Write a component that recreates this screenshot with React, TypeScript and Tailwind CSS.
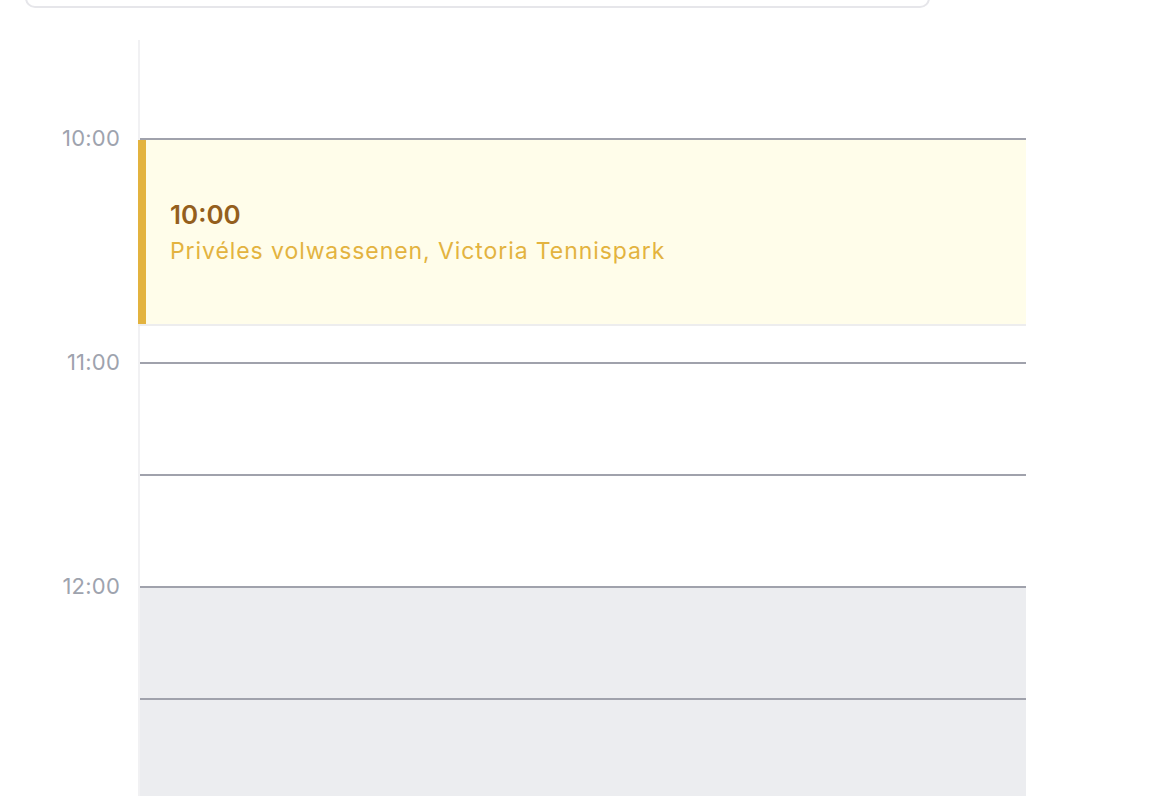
import React from "react";

interface Slot {
  height: number;
  label?: string;
  line: boolean;
  closed?: boolean;
}

const slots: Slot[] = [
  { height: 98, line: false },
  { height: 112, line: true, label: "10:00" },
  { height: 112, line: true },
  { height: 112, line: true, label: "11:00" },
  { height: 112, line: true },
  { height: 112, line: true, label: "12:00", closed: true },
  { height: 112, line: true, closed: true },
];

export default function App() {
  return (
    <div className="flex h-[796px] w-[1152px] flex-col overflow-hidden bg-white font-['Inter',sans-serif]">
      {/* Search box, mostly scrolled off */}
      <div className="-mt-[40px] ml-[25px] h-[48px] w-[905px] shrink-0 rounded-[10px] border-2 border-[#e6e6ea]" />

      {/* Day view */}
      <div className="mt-[32px] flex">
        <div className="w-[138px] shrink-0">
          {slots.map((slot, i) => (
            <div key={i} className="relative" style={{ height: slot.height }}>
              {slot.label && (
                <span className="absolute right-[18px] top-0 -translate-y-1/2 text-[22px] leading-none tracking-[0.01em] text-[#9ea3ae]">
                  {slot.label}
                </span>
              )}
            </div>
          ))}
        </div>

        <div className="relative w-[888px] shrink-0 border-l-2 border-[#f1f1f3]">
          {slots.map((slot, i) => (
            <div
              key={i}
              className={`${slot.line ? "border-t-2 border-[#a0a2ac]" : ""} ${
                slot.closed ? "bg-[#ecedf0]" : ""
              }`}
              style={{ height: slot.height }}
            />
          ))}

          {/* Booking */}
          <div className="absolute -left-[2px] right-0 top-[100px] h-[186px] border-b-2 border-[#ededee]">
            <div className="flex h-full flex-col justify-center border-l-8 border-[#e3b33f] bg-[#fffdea] pl-[24px]">
              <div className="text-[26px] font-semibold leading-[32px] text-[#945f1d]">
                10:00
              </div>
              <div className="mt-[6px] text-[23px] leading-[28px] tracking-[0.04em] text-[#e3b33f]">
                Privéles volwassenen, Victoria Tennispark
              </div>
            </div>
          </div>
        </div>
      </div>
    </div>
  );
}
